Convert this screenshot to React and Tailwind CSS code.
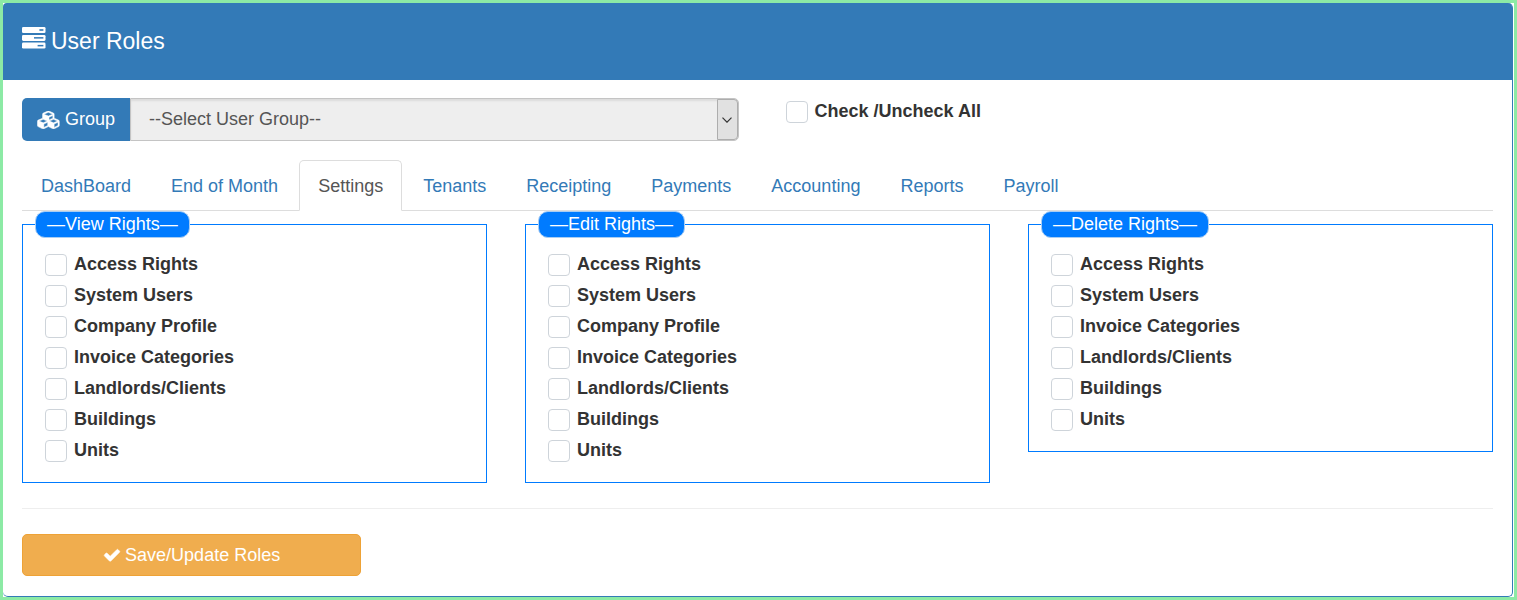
import { useState } from "react";

function Icon({ className, viewBox, d }) {
  return (
    <svg
      className={className}
      viewBox={viewBox}
      fill="currentColor"
      stroke="currentColor"
      strokeWidth="50"
      strokeLinejoin="round"
      aria-hidden="true"
    >
      <path d={d} />
    </svg>
  );
}

function TasksIcon({ className }) {
  return (
    <svg className={className} viewBox="0 0 24 22" fill="currentColor" aria-hidden="true">
      <rect x="0" y="0" width="23.5" height="6" rx="1.3" />
      <rect x="0" y="7.9" width="23.5" height="6" rx="1.3" />
      <rect x="0" y="15.6" width="23.5" height="6" rx="1.3" />
      <g fill="#337ab7">
        <rect x="17.4" y="2.2" width="4" height="1.6" />
        <rect x="12" y="10.1" width="9.4" height="1.5" />
        <rect x="15.6" y="17.9" width="5.8" height="1.5" />
      </g>
    </svg>
  );
}

const CUBES =
  "M640 1632l384-192v-314l-384 164v342zm-64-454l404-173-404-173-404 173zm1088 454l384-192v-314l-384 164v342zm-64-454l404-173-404-173-404 173zm-448-293l384-165v-266l-384 164v267zm-64-379l441-189-441-189-441 189zm1088 518v416q0 36-19 67t-52 47l-448 224q-25 14-57 14t-57-14l-448-224q-4-2-7-4-2 2-7 4l-448 224q-25 14-57 14t-57-14l-448-224q-33-16-52-47t-19-67v-416q0-38 21.5-70t56.5-48l434-186v-400q0-38 21.5-70t56.5-48l448-192q23-10 50-10t50 10l448 192q35 16 56.5 48t21.5 70v400l434 186q36 16 57 48t21 70z";
const CHECK =
  "M1671 566q0 40-28 68l-724 724-136 136q-28 28-68 28t-68-28l-136-136-362-362q-28-28-28-68t28-68l136-136q28-28 68-28t68 28l294 295 656-657q28-28 68-28t68 28l136 136q28 28 28 68z";

const TABS = [
  "DashBoard",
  "End of Month",
  "Settings",
  "Tenants",
  "Receipting",
  "Payments",
  "Accounting",
  "Reports",
  "Payroll",
];

const SECTIONS = [
  {
    name: "View Rights",
    items: ["Access Rights", "System Users", "Company Profile", "Invoice Categories", "Landlords/Clients", "Buildings", "Units"],
  },
  {
    name: "Edit Rights",
    items: ["Access Rights", "System Users", "Company Profile", "Invoice Categories", "Landlords/Clients", "Buildings", "Units"],
  },
  {
    name: "Delete Rights",
    items: ["Access Rights", "System Users", "Invoice Categories", "Landlords/Clients", "Buildings", "Units"],
  },
];

const ALL_KEYS = SECTIONS.flatMap((s) => s.items.map((item) => `${s.name}/${item}`));

function Check({ label, checked, onChange }) {
  return (
    <label className="flex h-[31px] w-fit items-center gap-[7px] font-bold">
      <input
        type="checkbox"
        checked={checked}
        onChange={onChange}
        className="size-[22px] shrink-0 appearance-none rounded border border-[#ced4da] bg-white checked:border-[#007bff] checked:bg-[#007bff]"
      />
      {label}
    </label>
  );
}

export default function App() {
  const [tab, setTab] = useState("Settings");
  const [checked, setChecked] = useState([]);

  const toggle = (key) =>
    setChecked((c) => (c.includes(key) ? c.filter((k) => k !== key) : [...c, key]));
  const all = checked.length === ALL_KEYS.length;

  return (
    <div className="min-h-screen border-[3px] border-[#8ceaa5] bg-white pr-px font-['Liberation_Sans',Arial,sans-serif] text-[18px] leading-[25px] text-[#333]">
      <main className="rounded-[5px] border-r border-b border-[#337ab7]">
        <header className="flex h-[77px] items-center gap-[5px] rounded-t bg-[#337ab7] px-[19px] text-white">
          <TasksIcon className="mb-[7px] h-[22px] w-6" />
          <h1 className="text-[23px] leading-[25px]">User Roles</h1>
        </header>

        <div className="px-[19px] pt-[18px] pb-5">
          <div className="grid grid-cols-2 gap-[38px]">
            <div className="flex h-[43px]">
              <label
                htmlFor="group"
                className="flex shrink-0 items-center gap-1 rounded-l-[5px] bg-[#337ab7] px-[15px] text-white"
              >
                <Icon className="h-[18px] w-6" viewBox="0 0 2304 1792" d={CUBES} />
                Group
              </label>
              <div className="relative min-w-0 flex-1">
                <select
                  id="group"
                  className="h-full w-full appearance-none rounded-r-[5px] border border-[#c4c4c4] bg-[#eee] pr-8 pl-[18px] text-[#555] shadow-[inset_0_2px_2px_rgba(0,0,0,0.08)]"
                >
                  <option>--Select User Group--</option>
                </select>
                <span className="pointer-events-none absolute inset-y-px right-px flex w-[21px] items-center justify-center rounded-r border border-[#adadad] bg-[#e1e1e1]">
                  <svg className="h-[6px] w-[10px]" viewBox="0 0 10 6" fill="none" stroke="#333" strokeWidth="1.2" aria-hidden="true">
                    <path d="M0.5 0.7 L5 5.2 L9.5 0.7" />
                  </svg>
                </span>
              </div>
            </div>
            <div className="-mt-[2px] pl-[9px]">
              <Check
                label="Check /Uncheck All"
                checked={all}
                onChange={() => setChecked(all ? [] : ALL_KEYS)}
              />
            </div>
          </div>

          <nav className="mt-[19px] flex gap-[2px] border-b border-[#ddd]" role="tablist">
            {TABS.map((name) => (
              <button
                key={name}
                type="button"
                role="tab"
                aria-selected={tab === name}
                onClick={() => setTab(name)}
                className={
                  tab === name
                    ? "-mb-px h-[51px] rounded-t-[5px] border border-b-white border-[#ddd] bg-white px-[18px] pt-px text-[#555]"
                    : "h-[50px] border border-transparent px-[18px] pt-[2px] text-[#337ab7]"
                }
              >
                {name}
              </button>
            ))}
          </nav>

          <div className="grid grid-cols-3 items-start gap-[38px]">
            {SECTIONS.map((s) => (
              <fieldset key={s.name} className="min-w-0 border border-[#007bff] px-[22px] pt-[11px] pb-4">
                <legend className="-ml-[10px] rounded-[10px] border border-[#a9cdf3] bg-[#007bff] px-[11px] text-white">
                  —{s.name}—
                </legend>
                {s.items.map((item) => {
                  const key = `${s.name}/${item}`;
                  return (
                    <Check key={key} label={item} checked={checked.includes(key)} onChange={() => toggle(key)} />
                  );
                })}
              </fieldset>
            ))}
          </div>

          <hr className="my-[25px] border-[#eee]" />

          <div className="grid grid-cols-4 gap-[38px]">
            <button
              type="button"
              className="flex h-[42px] items-center justify-center gap-1 rounded-[5px] border border-[#eea236] bg-[#f0ad4e] text-white"
            >
              <Icon className="size-[18px]" viewBox="0 0 1792 1792" d={CHECK} />
              Save/Update Roles
            </button>
          </div>
        </div>
      </main>
    </div>
  );
}
